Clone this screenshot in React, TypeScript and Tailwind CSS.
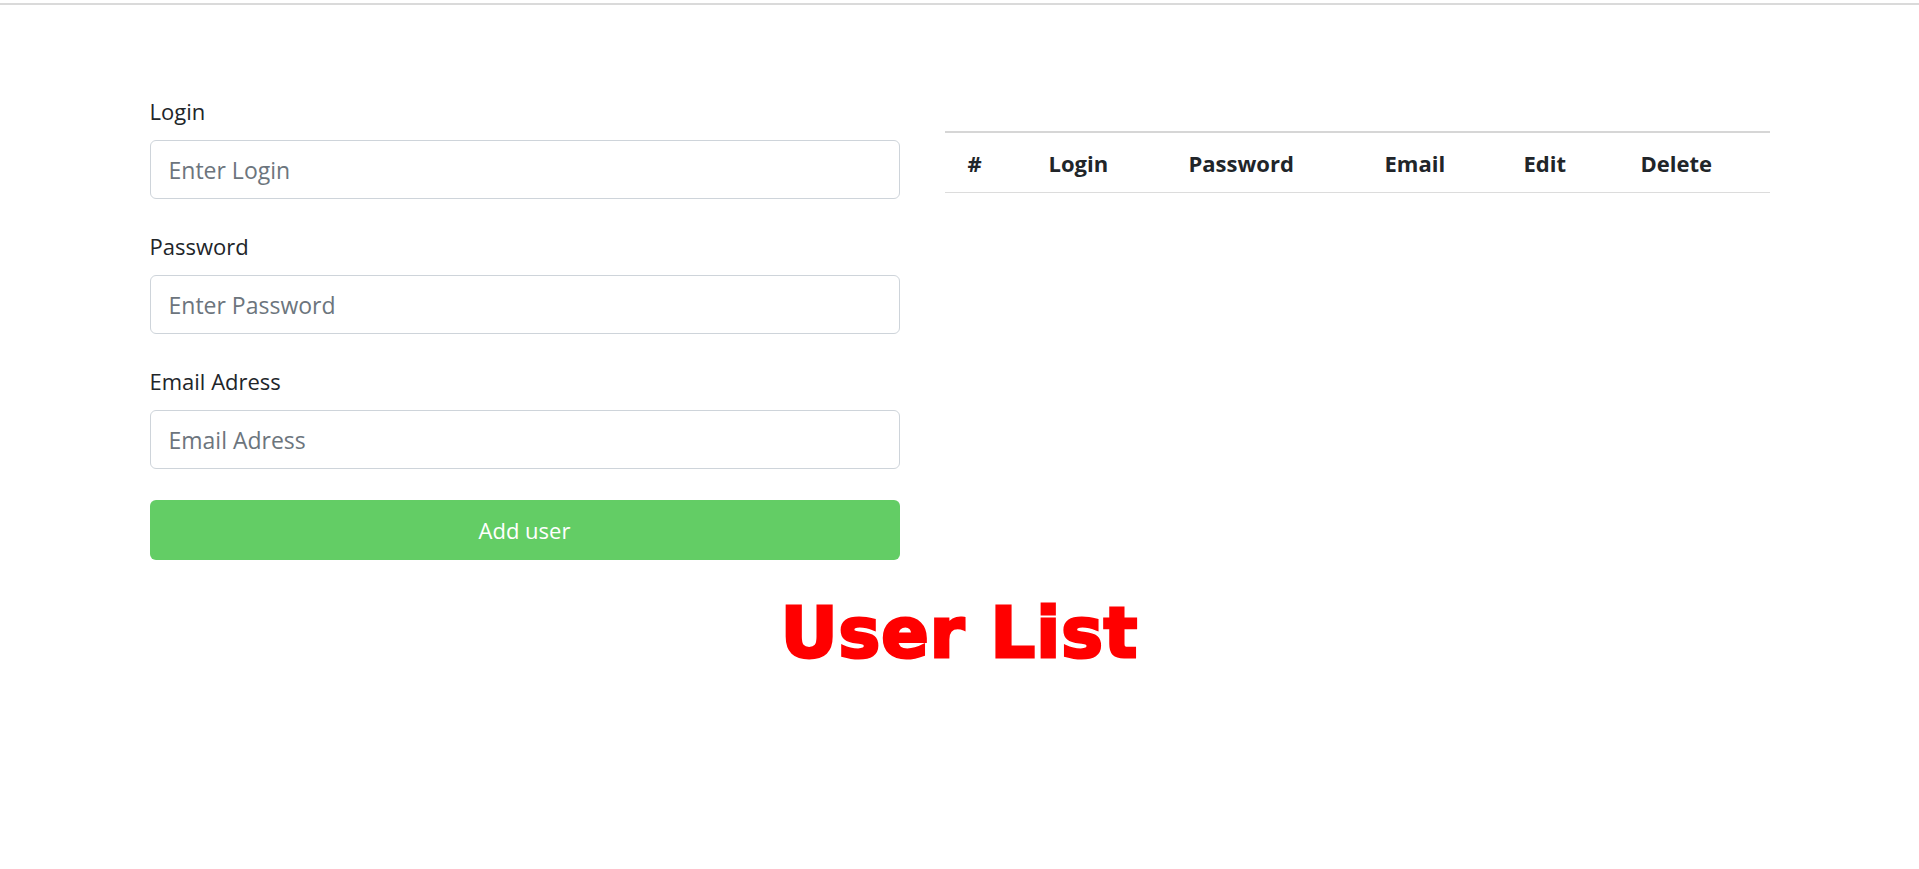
import { useState } from 'react';

const FIELDS = [
  { key: 'login', label: 'Login', placeholder: 'Enter Login', type: 'text' },
  { key: 'password', label: 'Password', placeholder: 'Enter Password', type: 'password' },
  { key: 'email', label: 'Email Adress', placeholder: 'Email Adress', type: 'email' },
] as const;

const COLUMNS = [
  ['#', 'w-[81px]'],
  ['Login', 'w-[140px]'],
  ['Password', 'w-[196px]'],
  ['Email', 'w-[139px]'],
  ['Edit', 'w-[117px]'],
  ['Delete', 'w-[152px]'],
] as const;

type Form = Record<(typeof FIELDS)[number]['key'], string>;

export default function App() {
  const [form, setForm] = useState<Form>({ login: '', password: '', email: '' });

  return (
    <div className="min-h-screen bg-white font-['Open_Sans',sans-serif] text-[#212529]">
      <div className="mt-[3px] h-[2px] bg-[#dadada]" />

      <div className="mx-auto flex w-[1620px] items-start gap-[45px] pt-[90px]">
        {/* Add user form */}
        <form className="flex w-[750px] flex-col" onSubmit={(e) => e.preventDefault()}>
          {FIELDS.map((f, i) => (
            <div key={f.key} className={i > 0 ? 'mt-[31px]' : ''}>
              <label htmlFor={f.key} className="block text-[22px] leading-[32px]">
                {f.label}
              </label>
              <input
                id={f.key}
                type={f.type}
                placeholder={f.placeholder}
                value={form[f.key]}
                onChange={(e) => setForm((s) => ({ ...s, [f.key]: e.target.value }))}
                className="mt-[13px] block h-[59px] w-full rounded-md border border-[#ced4da] bg-white pl-[18px] text-[23px] text-[#495057] outline-none placeholder:text-[#6c757d]"
              />
            </div>
          ))}
          <button
            type="submit"
            className="mt-[31px] h-[60px] w-full rounded-md bg-[#63cd65] text-[22px] text-white"
          >
            Add user
          </button>
        </form>

        {/* Users table */}
        <table className="mt-[36px] w-[825px] table-fixed border-collapse">
          <thead>
            <tr className="border-t-2 border-b border-t-[#d6d6d6] border-b-[#dcdcdc]">
              {COLUMNS.map(([name, w]) => (
                <th
                  key={name}
                  className={`${w} pl-[23px] pt-[13px] pb-[11px] text-left text-[22px] leading-[35px] font-bold`}
                >
                  {name}
                </th>
              ))}
            </tr>
          </thead>
          <tbody />
        </table>
      </div>

      <h1 className="mt-[38px] text-center font-['DejaVu_Sans',sans-serif] text-[70px] leading-none font-bold tracking-[1px] text-[#ff0000] [-webkit-text-stroke:3px_#ff0000]">
        User List
      </h1>
    </div>
  );
}
